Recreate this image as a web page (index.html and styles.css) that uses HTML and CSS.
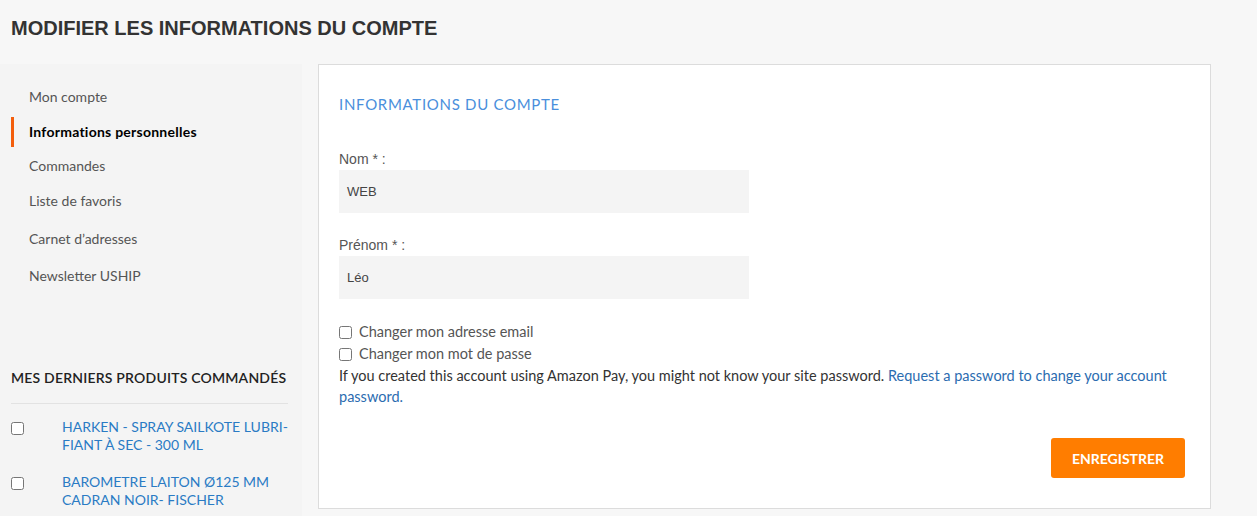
FILE: index.html
```html
<!DOCTYPE html>
<html lang="fr">
<head>
<meta charset="utf-8">
<title>Modifier les informations du compte</title>
<link rel="stylesheet" href="styles.css">
</head>
<body>
<h1 class="page-title">MODIFIER LES INFORMATIONS DU COMPTE</h1>
<div class="layout">
  <aside class="sidebar">
    <nav class="account-nav">
      <a class="nav-item" href="#">Mon compte</a>
      <a class="nav-item active" href="#">Informations personnelles</a>
      <a class="nav-item" href="#">Commandes</a>
      <a class="nav-item" href="#">Liste de favoris</a>
      <a class="nav-item wide" href="#">Carnet d’adresses</a>
      <a class="nav-item wide2" href="#">Newsletter USHIP</a>
    </nav>
    <div class="recent">
      <h2 class="recent-title">MES DERNIERS PRODUITS COMMANDÉS</h2>
      <ul class="recent-list">
        <li class="recent-item"><input type="checkbox" class="cb"><a href="#">HARKEN - SPRAY SAILKOTE LUBRI-<br>FIANT À SEC - 300 ML</a></li>
        <li class="recent-item"><input type="checkbox" class="cb"><a href="#">BAROMETRE LAITON Ø125 MM<br>CADRAN NOIR- FISCHER</a></li>
      </ul>
    </div>
  </aside>
  <main class="panel">
    <h2 class="panel-title">INFORMATIONS DU COMPTE</h2>
    <div class="field">
      <label class="label">Nom * :</label>
      <div class="input">WEB</div>
    </div>
    <div class="field">
      <label class="label">Prénom * :</label>
      <div class="input">Léo</div>
    </div>
    <div class="checks">
      <label class="check"><input type="checkbox" class="cb"> Changer mon adresse email</label>
      <label class="check"><input type="checkbox" class="cb"> Changer mon mot de passe</label>
    </div>
    <p class="note">If you created this account using Amazon Pay, you might not know your site password. <a href="#">Request a password to change your account password.</a></p>
    <div class="actions">
      <button class="save">ENREGISTRER</button>
    </div>
  </main>
</div>
</body>
</html>
```

FILE: styles.css
```css
* { box-sizing: border-box; }
html, body { margin: 0; padding: 0; }
body {
  background: #f7f7f7;
  font-family: "Lato", "Noto Sans", sans-serif;
  color: #333;
  width: 1257px;
  height: 516px;
  overflow: hidden;
}
.page-title {
  margin: 0;
  padding: 16px 0 0 11px;
  height: 64px;
  font-family: "Liberation Sans", Arial, sans-serif;
  font-weight: bold;
  font-size: 20px;
  line-height: 24px;
  color: #333;
}
.layout {
  display: flex;
  align-items: flex-start;
}
.sidebar {
  width: 302px;
  background: #f4f4f4;
  height: 460px;
  flex-shrink: 0;
}
.account-nav {
  display: flex;
  flex-direction: column;
  gap: 5px;
  padding-top: 18px;
}
.nav-item {
  display: block;
  height: 30px;
  line-height: 30px;
  margin-left: 11px;
  padding-left: 15px;
  border-left: 3px solid transparent;
  font-size: 14px;
  color: #555;
  text-decoration: none;
}
.nav-item.active {
  color: #000;
  font-weight: bold;
  letter-spacing: 0.25px;
  border-left-color: #f35e0c;
  margin-bottom: -1px;
}
.nav-item.wide { margin-top: 3px; }
.nav-item.wide2 { margin-top: 2px; }
.recent {
  margin: 77px 14px 0 11px;
}
.recent-title {
  margin: 0;
  font-size: 14px;
  font-weight: 600;
  letter-spacing: 0.2px;
  color: #222;
  line-height: 20px;
  padding-bottom: 15px;
  border-bottom: 1px solid #e2e2e2;
}
.recent-list {
  list-style: none;
  margin: 0;
  padding: 14px 0 0;
}
.recent-item {
  display: flex;
  align-items: flex-start;
  margin-bottom: 19px;
}
.recent-item .cb { margin: 4px 38px 0 0; }
.recent-item a {
  color: #2a7bc4;
  text-decoration: none;
  font-size: 14px;
  line-height: 18px;
}
.cb {
  width: 13px;
  height: 13px;
  margin: 0;
  flex-shrink: 0;
}
.panel {
  margin-left: 16px;
  width: 893px;
  height: 445px;
  background: #fff;
  border: 1px solid #dcdcdc;
  padding: 29px 20px 0 20px;
  font-family: "Liberation Sans", Arial, sans-serif;
}
.panel-title {
  margin: 0 0 35px;
  font-family: "Lato", "Noto Sans", sans-serif;
  font-weight: normal;
  font-size: 15px;
  letter-spacing: 0.7px;
  line-height: 20px;
  color: #4a8fdc;
}
.field { margin-bottom: 22px; }
.field + .field { margin-bottom: 22px; }
.label {
  display: block;
  font-size: 14px;
  color: #555;
  line-height: 20px;
  margin-bottom: 1px;
}
.input {
  width: 410px;
  height: 43px;
  background: #f4f4f4;
  padding: 0 8px;
  font-size: 13px;
  line-height: 43px;
  color: #444;
}
.checks { display: flex; flex-direction: column; }
.check {
  display: flex;
  align-items: center;
  gap: 7px;
  height: 22px;
  font-family: "Lato", "Noto Sans", sans-serif;
  font-size: 14.5px;
  color: #555;
  line-height: 22px;
}
.note {
  margin: 0;
  font-family: "Lato", "Noto Sans", sans-serif;
  font-size: 14.5px;
  line-height: 21px;
  color: #333;
}
.note a { color: #2b6cb0; text-decoration: none; }
.actions {
  display: flex;
  justify-content: flex-end;
  margin-top: 31px;
  padding-right: 5px;
}
.save {
  width: 134px;
  height: 40px;
  border: 0;
  border-radius: 3px;
  background: #ff7d00;
  color: #fff;
  font-family: "Lato", "Noto Sans", sans-serif;
  font-weight: bold;
  font-size: 14px;
  cursor: pointer;
}
```
